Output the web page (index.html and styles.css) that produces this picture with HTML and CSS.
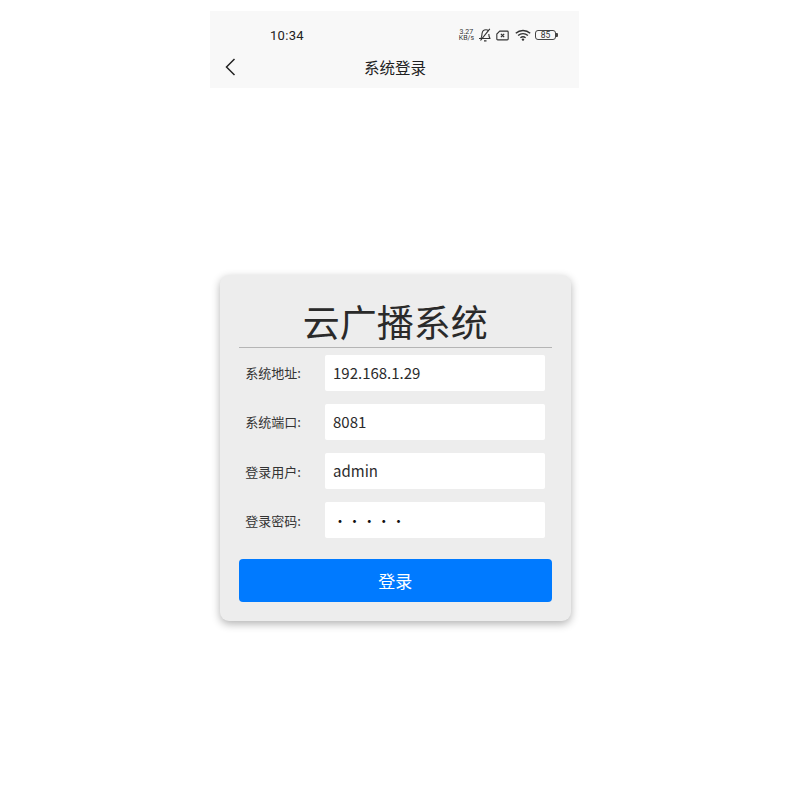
FILE: index.html
```html
<!DOCTYPE html>
<html lang="zh-CN">
<head>
<meta charset="utf-8">
<title>系统登录</title>
<link rel="stylesheet" href="styles.css">
</head>
<body>
<main class="phone">
  <header class="top">
    <div class="status">
      <span class="time">10:34</span>
      <div class="status-icons">
        <span class="speed"><span>3.27</span><span>KB/s</span></span>
        <svg class="ic-bell" viewBox="0 0 14 14" width="14" height="14" fill="none" stroke="#333" stroke-width="1.100"><path d="M1 10.500h11.500M2.800 10.500c1.200-1.500 1-3.200 1.200-4.800C4.300 3.300 6 1.800 8 1.800c1 0 1.900.4 2.500 1M10.800 6c0 1.800.3 3.300 1.300 4.500"/><path d="M11.800 .8L2.500 12.500M6 12.900h2.500" stroke-width="1.200"/></svg>
        <svg class="ic-sim" viewBox="0 0 14 12" width="13" height="11" fill="none" stroke="#333" stroke-width="1.200"><path d="M4 1.200h8.200a1 1 0 0 1 1 1v7.600a1 1 0 0 1-1 1H1.800a1 1 0 0 1-1-1V4.400z"/><path d="M5.300 4.200l3.500 3.600M8.800 4.200L5.300 7.800" stroke-width="1.400"/></svg>
        <svg class="ic-wifi" viewBox="0 0 16 12" width="16" height="12" fill="none" stroke="#333" stroke-width="1.400"><path d="M.8 4.300c4-3.700 10.400-3.700 14.400 0M3.100 6.500c2.800-2.500 7-2.500 9.800 0M5.400 8.700c1.500-1.200 3.700-1.200 5.200 0"/><circle cx="8" cy="10.600" r="1.200" fill="#333" stroke="none"/></svg>
        <span class="battery"><span class="battery-body">85</span><span class="battery-tip"></span></span>
      </div>
    </div>
    <div class="nav">
      <svg class="back" viewBox="0 0 12 20" width="12" height="20" fill="none" stroke="#222" stroke-width="1.500"><path d="M10.500 2L2.500 10l8 8"/></svg>
      <h1 class="nav-title">系统登录</h1>
    </div>
  </header>
  <section class="card">
    <h2 class="card-title">云广播系统</h2>
    <div class="rows">
      <div class="row"><span class="label">系统地址:</span><div class="field">192.168.1.29</div></div>
      <div class="row"><span class="label">系统端口:</span><div class="field">8081</div></div>
      <div class="row"><span class="label">登录用户:</span><div class="field">admin</div></div>
      <div class="row"><span class="label">登录密码:</span><div class="field dots">•••••</div></div>
    </div>
    <button class="submit" type="button">登录</button>
  </section>
</main>
</body>
</html>
```
FILE: styles.css
```css
* { box-sizing: border-box; }
html, body { margin: 0; padding: 0; background: #fff; }
body {
  height: 800px;
  overflow: hidden;
  padding: 11px 0 0 210px;
  font-family: "Noto Sans CJK SC", "Noto Sans", sans-serif;
  color: #222;
}
.phone { width: 369px; }
.top { height: 77px; background: #f8f8f8; }
.status {
  height: 41px;
  padding: 7px 21px 0 60px;
  display: flex;
  justify-content: space-between;
  align-items: center;
}
.time { font-family: Roboto, sans-serif; font-size: 13px; color: #222; letter-spacing: .3px; }
.status-icons { display: flex; align-items: center; gap: 4px; }
.speed {
  display: flex;
  flex-direction: column;
  align-items: center;
  font-family: Roboto, sans-serif;
  font-size: 7px;
  line-height: 6.500px;
  color: #333;
}
.ic-sim { margin-right: 2px; }
.battery { display: flex; align-items: center; }
.battery-body {
  width: 21px;
  height: 10px;
  border: 1px solid #444;
  border-radius: 3px;
  font-family: Roboto, sans-serif;
  font-size: 8.500px;
  line-height: 8px;
  text-align: center;
  color: #333;
}
.battery-tip { width: 2px; height: 4px; background: #444; border-radius: 0 1px 1px 0; }
.nav {
  height: 36px;
  position: relative;
  display: flex;
  align-items: center;
  justify-content: center;
}
.back { position: absolute; left: 14px; top: 5px; }
.nav-title { margin: 0 0 7px 1px; font-size: 15.500px; font-weight: 400; color: #222; line-height: 20px; }
.card {
  width: 351px;
  height: 346px;
  margin: 186.500px 0 0 10px;
  padding: 21px 19px 0 18.700px;
  background: #ededed;
  border-radius: 9px;
  box-shadow: 0 3px 8px rgba(0, 0, 0, .3);
}
.card-title {
  margin: 0;
  height: 52px;
  border-bottom: 1px solid #b5b5b5;
  text-align: center;
  font-size: 37px;
  line-height: 50px;
  font-weight: 400;
  color: #2a2a2a;
}
.rows { padding: 7px 7px 0 6.500px; display: flex; flex-direction: column; gap: 13.300px; }
.row { display: flex; align-items: center; justify-content: space-between; }
.label { font-size: 13px; color: #333; }
.field {
  width: 220px;
  height: 36px;
  background: #fff;
  border-radius: 2px;
  padding-left: 8px;
  font-size: 15px;
  line-height: 36px;
  color: #2b2b2b;
}
.dots { font-size: 14px; letter-spacing: .6px; padding-left: 8px; color: #111; }
.submit {
  display: block;
  width: 100%;
  height: 43px;
  margin-top: 20.500px;
  border: 0;
  border-radius: 4px;
  background: #007aff;
  color: #fff;
  font-family: inherit;
  font-size: 17px;
}
```
